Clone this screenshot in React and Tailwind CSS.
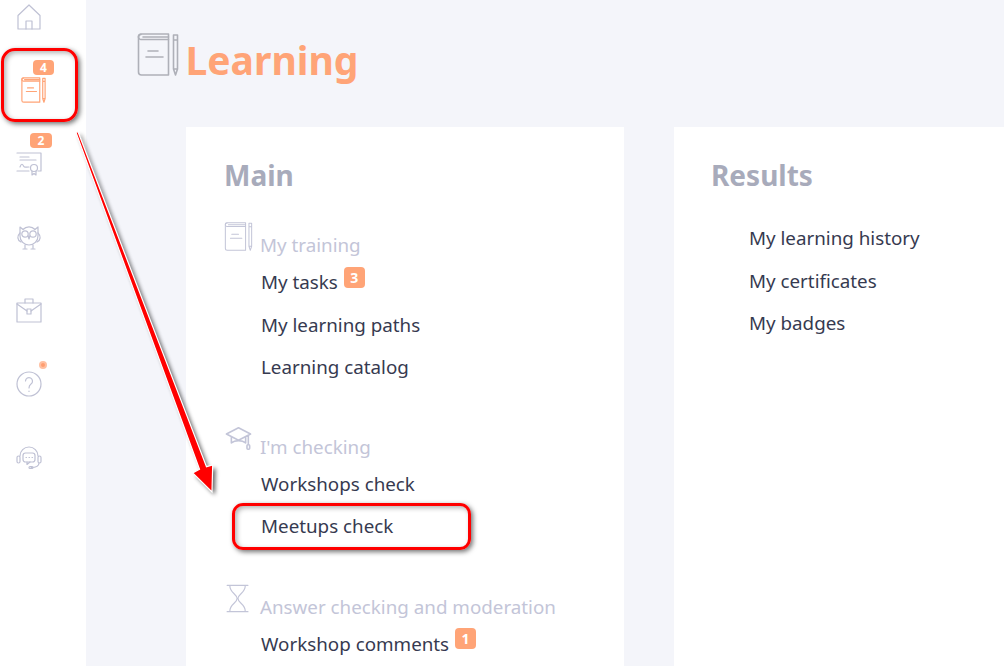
const BookIcon = ({ className, stroke = "#c3c5d8", sw = 1.5 }) => (
  <svg viewBox="0 0 42 43" fill="none" stroke={stroke} strokeWidth={sw} strokeLinejoin="round" strokeLinecap="round" className={className}>
    <path d="M4 1h27.500v41H4.500A3 3 0 0 1 1.500 39V3.500A2.500 2.500 0 0 1 4 1Z" />
    <path d="M4 1.500A2.500 2.500 0 0 0 4 6.500h27.500M6 4h25.500" />
    <path d="M11 18h10M9 24h17" />
    <path d="M36.500 2h4v34l-2 6-2-6ZM36.500 7h4M36.500 36h4" />
  </svg>
);

const NavIcon = ({ children, className = "" }) => (
  <svg viewBox="0 0 26 26" fill="none" stroke="#bfc1d4" strokeWidth="1.200" strokeLinejoin="round" strokeLinecap="round" className={"block h-[26px] w-[26px] " + className}>
    {children}
  </svg>
);

const Badge = ({ children, className = "" }) => (
  <span className={"flex items-center justify-center rounded-[4px] bg-[#ffa477] font-bold text-white " + className}>{children}</span>
);

const Section = ({ icon, label, children, className = "" }) => (
  <section className={className}>
    <div className="flex h-[36px] items-end">
      <div className="flex w-[36px] shrink-0 items-end">{icon}</div>
      <span className="text-[18.800px] leading-[26px] text-[#c3c5d8]">{label}</span>
    </div>
    <ul className="mt-[3px] flex flex-col pl-[37px]">{children}</ul>
  </section>
);

const Item = ({ children, badge }) => (
  <li className="flex h-[42.500px] items-center gap-[6px] text-[18.800px] text-[#363a50]">
    <span>{children}</span>
    {badge && <Badge className="mb-[10px] h-[21px] w-[21px] text-[14px]">{badge}</Badge>}
  </li>
);

export default function App() {
  return (
    <div className="relative flex h-[666px] w-[1004px] overflow-hidden bg-white font-['Noto_Sans','Open_Sans',sans-serif]">
      <aside className="flex w-[86px] shrink-0 flex-col items-start bg-white pl-[16px]">
        <NavIcon className="mt-[4px]">
          <path d="M13 1 2 11.500v13.500h22V11.500Z" />
          <path d="M10 25v-8h6v8" />
        </NavIcon>
        <div className="relative ml-[5px] mt-[47px] h-[26px]">
          <Badge className="absolute left-[12px] top-[-17px] h-[15px] w-[21px] text-[12px]">4</Badge>
          <BookIcon className="h-[26px] w-[25px]" stroke="#ffa477" sw="2" />
        </div>
        <div className="relative mt-[47px] h-[26px]">
          <Badge className="absolute left-[14px] top-[-17px] h-[15px] w-[22px] text-[12px]">2</Badge>
          <NavIcon>
            <path d="M1 3h24v18h-3M13 21H1Z" />
            <path d="M4 7h9M4 10h16M4 17c1.500-4 2.500-3 3.500-1s2 1 5.500 1" />
            <circle cx="18" cy="18" r="3.500" />
            <path d="M16 21v4l2-1.500 2 1.500v-4" />
          </NavIcon>
        </div>
        <NavIcon className="mt-[48px]">
          <path d="M4 3l3 2.500a8 8 0 0 1 12 0L22 3v9a9 9 0 0 1-18 0Z" />
          <circle cx="9" cy="10" r="3.200" /><circle cx="17" cy="10" r="3.200" />
          <path d="M12 12h2l-1 3ZM4 9c-3 3-3 7 1 9M22 9c3 3 3 7-1 9M9 21v3M17 21v3M7 25h4M15 25h4" />
        </NavIcon>
        <NavIcon className="mt-[47px]">
          <path d="M1 6h24v19H1Z" />
          <path d="M9 6V2h8v4M1 7l10 7M25 7l-10 7" />
          <path d="M11 12h4v5h-4Z" />
        </NavIcon>
        <div className="relative mt-[48px]">
          <span className="absolute left-[23px] top-[-10px] h-[8px] w-[8px] rounded-full border-2 border-[#ffc0a1] bg-[#ff9d70]" />
          <NavIcon>
            <circle cx="13" cy="13" r="12" />
            <path d="M9.500 10a3.500 3.500 0 1 1 5.500 3c-1.500 1-2 2-2 4M13 20v.5" />
          </NavIcon>
        </div>
        <NavIcon className="mt-[47px]">
          <path d="M4 12a9 9 0 0 1 18 0" />
          <rect x="1" y="12" width="3" height="7" rx="1.500" /><rect x="22" y="12" width="3" height="7" rx="1.500" />
          <rect x="7" y="9" width="12" height="9" rx="2.500" />
          <path d="M11 18v2.500l3-2.500M10 13.500h.5M13 13.500h.5M16 13.500h.5M23 19c0 3-3 4.500-8 4.500" />
          <rect x="13" y="22.500" width="4" height="2" rx="1" />
        </NavIcon>
      </aside>

      <main className="min-w-0 flex-1 bg-[#f4f5fa]">
        <header className="flex h-[127px] items-start pl-[51px] pt-[33px]">
          <BookIcon className="h-[43px] w-[42px]" stroke="#aeb0b8" sw="1.600" />
          <h1 className="mt-[-8px] pl-[6.500px] text-[39px] font-bold leading-[70px] text-[#ffa477]">Learning</h1>
        </header>
        <div className="flex gap-[50px] pl-[100px]">
          <div className="h-[539px] w-[438px] shrink-0 bg-white pl-[38px] pt-[28px]">
            <h2 className="text-[28px] font-bold leading-[40px] text-[#a8abbb]">Main</h2>
            <Section className="mt-[27px]" label="My training" icon={<BookIcon className="mb-[7px] h-[29px] w-[29px]" />}>
              <Item badge="3">My tasks</Item>
              <Item>My learning paths</Item>
              <Item>Learning catalog</Item>
            </Section>
            <Section
              className="mt-[35px]"
              label="I'm checking"
              icon={
                <svg viewBox="0 0 30 28" fill="none" stroke="#c3c5d8" strokeWidth="1.800" strokeLinejoin="round" className="mb-[9px] h-[25px] w-[29px]">
                  <path d="M15 2 1.500 9 15 16l13.500-7ZM7 12.500V19c4-3.500 12-3.500 16 0v-6.500M26 10.500V21" />
                  <rect x="24.500" y="21" width="3" height="5" rx="1" />
                </svg>
              }
            >
              <Item>Workshops check</Item>
              <Item>Meetups check</Item>
            </Section>
            <Section
              className="mt-[36px]"
              label="Answer checking and moderation"
              icon={
                <svg viewBox="0 0 26 32" fill="none" stroke="#c3c5d8" strokeWidth="1.300" strokeLinecap="round" className="mb-[7px] ml-[2px] h-[29px] w-[24px]">
                  <path d="M1 1.500h23M1 30.500h23M4 2c0 8 8 9 8 14s-8 6-8 14M21 2c0 8-8 9-8 14s8 6 8 14" />
                </svg>
              }
            >
              <Item badge="1">Workshop comments</Item>
            </Section>
          </div>
          <div className="h-[539px] flex-1 bg-white pl-[37px] pt-[28px]">
            <h2 className="text-[28px] font-bold leading-[40px] text-[#a8abbb]">Results</h2>
            <ul className="mt-[22px] flex flex-col pl-[38px]">
              <Item>My learning history</Item>
              <Item>My certificates</Item>
              <Item>My badges</Item>
            </ul>
          </div>
        </div>
      </main>

      <div className="absolute left-[1px] top-[48px] h-[74px] w-[77px] rounded-[14px] border-[3.500px] border-[#f00] shadow-[2px_2px_5px_rgba(0,0,0,0.55),inset_2px_2px_5px_rgba(0,0,0,0.3)]" />
      <div className="absolute left-[232px] top-[503px] h-[47px] w-[239px] rounded-[11px] border-[3.500px] border-[#f00] shadow-[2px_2px_5px_rgba(0,0,0,0.55),inset_2px_2px_5px_rgba(0,0,0,0.3)]" />
      <svg className="absolute left-0 top-0 h-[666px] w-[1004px]" viewBox="0 0 1004 666" fill="none">
        <path d="M76 132.500 199.500 469.300 192.700 473 212 492 212.700 465 206.500 466.700 78 131.800Z" fill="#000" opacity="0.6" transform="translate(3 3)" style={{ filter: "blur(2px)" }} />
        <path d="M76 132.500 199.500 469.300 192.700 473 212 492 212.700 465 206.500 466.700 78 131.800Z" fill="#f00" stroke="#fff" strokeWidth="1.200" />
      </svg>
    </div>
  );
}
